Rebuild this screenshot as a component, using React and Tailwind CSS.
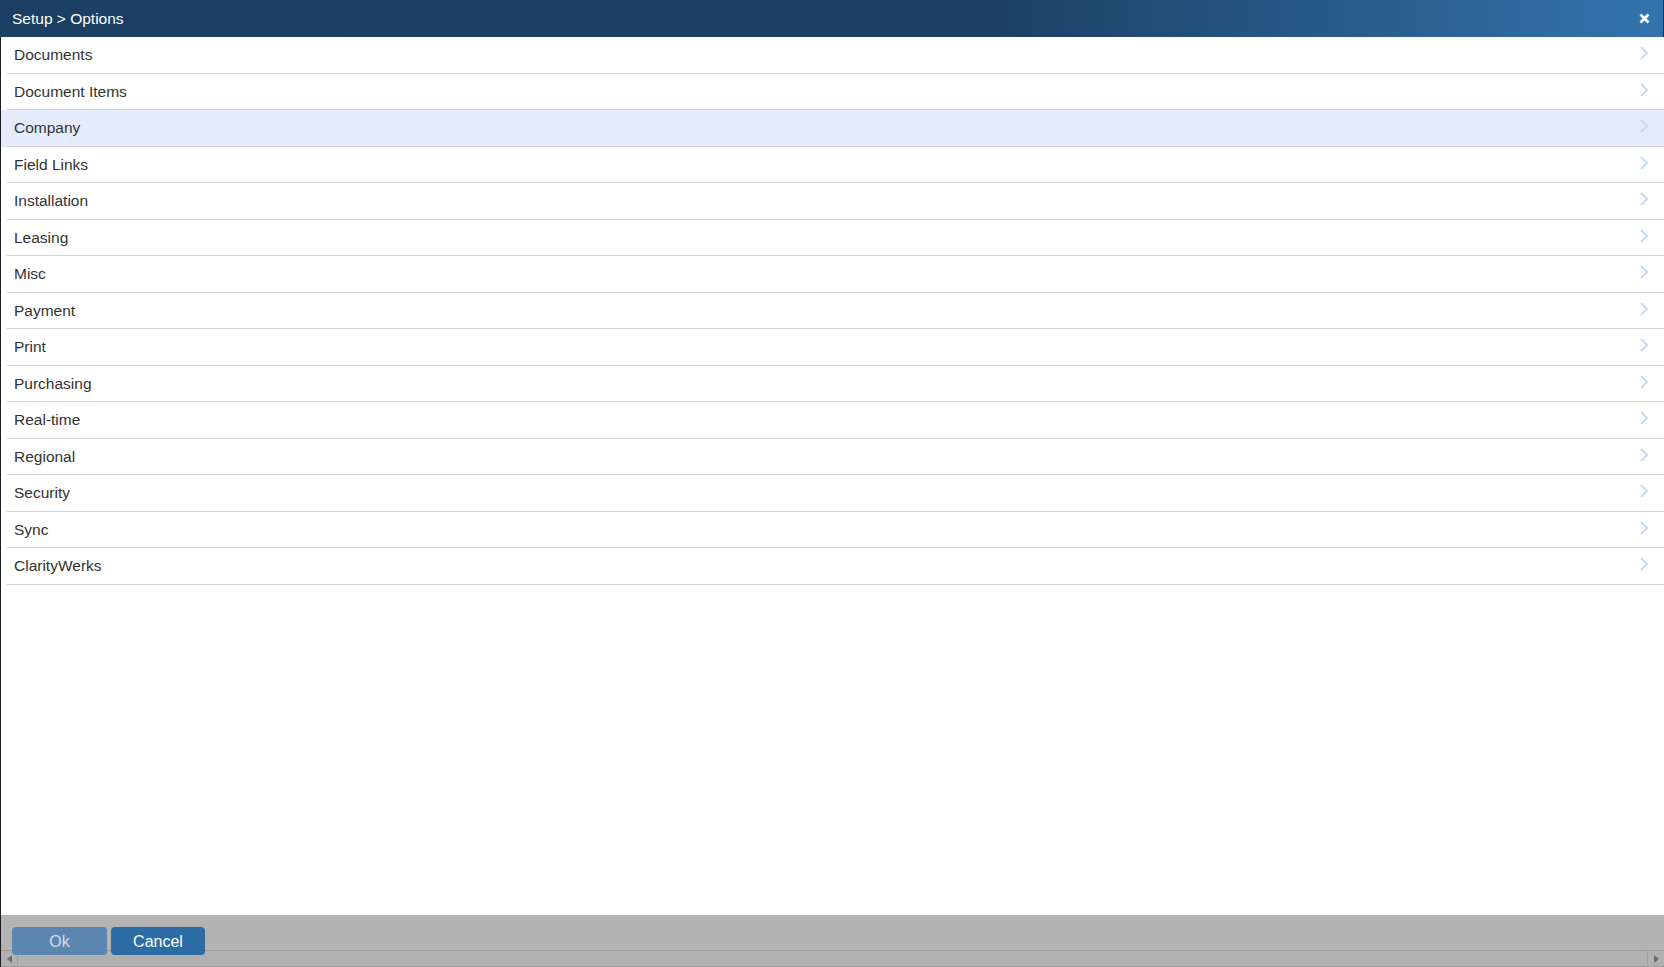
import React from "react";

const items = [
  "Documents",
  "Document Items",
  "Company",
  "Field Links",
  "Installation",
  "Leasing",
  "Misc",
  "Payment",
  "Print",
  "Purchasing",
  "Real-time",
  "Regional",
  "Security",
  "Sync",
  "ClarityWerks",
];

function Chevron() {
  return (
    <svg width="10" height="14" viewBox="0 0 10 14" className="shrink-0 -mt-[3px]">
      <polyline points="2,1 8,7 2,13" fill="none" stroke="#c4dbf3" strokeWidth="2" />
    </svg>
  );
}

export default function App() {
  return (
    <div
      className="w-[1664px] h-[967px] flex flex-col bg-white overflow-hidden"
      style={{ fontFamily: '"Liberation Sans", Arial, sans-serif' }}
    >
      <div className="h-[37px] shrink-0 flex items-center justify-between pl-[12px] pr-[13px] bg-[linear-gradient(to_right,#1b3f62_0%,#1c4165_60%,#3374ad_100%)] border-r border-[#1a2c40]">
        <span className="text-white text-[15.5px] leading-none">Setup &gt; Options</span>
        <svg width="11" height="11" viewBox="0 0 11 11">
          <line x1="1.5" y1="1.5" x2="9.5" y2="9.5" stroke="white" strokeWidth="2.6" />
          <line x1="9.5" y1="1.5" x2="1.5" y2="9.5" stroke="white" strokeWidth="2.6" />
        </svg>
      </div>
      <div className="flex-1 flex flex-col border-l border-[#1c1c24]">
        {items.map((it) => (
          <div
            key={it}
            className={
              "h-[36.5px] shrink-0 " + (it === "Company" ? "bg-[#e3ebfc]" : "bg-white")
            }
          >
            <div className="ml-[6px] h-full border-b border-[#d3d3d3] flex items-center justify-between pl-[7px] pr-[15px]">
              <span className="text-[15.5px] text-[#333333] leading-none">{it}</span>
              <Chevron />
            </div>
          </div>
        ))}
      </div>
      <div className="relative h-[52px] shrink-0 bg-[#b3b3b3] border-l border-[#1c1c24]">
        <div className="absolute left-0 right-0 bottom-0 h-[17px] border-t border-b border-[#9d9d9d] bg-[#b1b1b1] flex justify-between">
          <div className="w-[17px] h-full border-r border-[#a0a0a0] flex items-center justify-center">
            <svg width="5" height="8" viewBox="0 0 5 8">
              <polygon points="5,0 0,4 5,8" fill="#6e6e6e" />
            </svg>
          </div>
          <div className="w-[17px] h-full border-l border-[#a0a0a0] flex items-center justify-center">
            <svg width="5" height="8" viewBox="0 0 5 8">
              <polygon points="0,0 5,4 0,8" fill="#6e6e6e" />
            </svg>
          </div>
        </div>
        <div className="relative z-10 flex gap-[4px] pl-[11px] pt-[12px]">
          <button className="w-[95px] h-[28px] rounded-[4px] bg-[#5b86b0] text-[#d5dfe9] text-[16px] leading-none pt-[1px]">
            Ok
          </button>
          <button className="w-[94px] h-[28px] rounded-[4px] bg-[#2e6ca5] text-white text-[16px] leading-none pt-[1px]">
            Cancel
          </button>
        </div>
      </div>
    </div>
  );
}
